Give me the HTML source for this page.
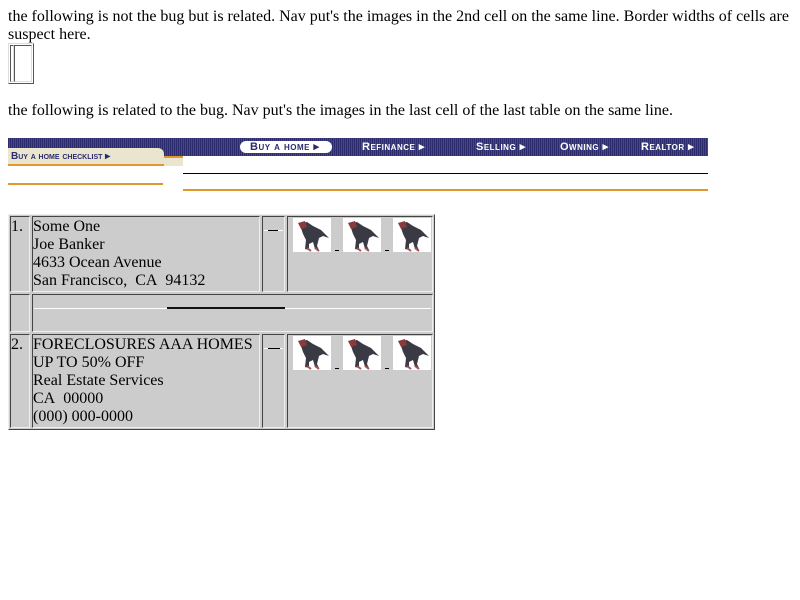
<!DOCTYPE html>
<html><head><meta charset="utf-8"><style>
*{margin:0;padding:0;box-sizing:border-box}
body{width:800px;height:600px;background:#fff;font-family:"Liberation Serif",serif;font-size:16px;color:#000;position:relative;overflow:hidden}
.a{position:absolute}
.t{line-height:18px;white-space:nowrap}
.nav{left:8px;top:138px;width:700px;height:18px;background:repeating-linear-gradient(90deg,#2b2b6e 0 1px,#46468a 1px 2px)}
.nl{position:absolute;top:2px;color:#fff;font-family:"Liberation Sans",sans-serif;font-weight:bold;font-size:11px;font-variant:small-caps;letter-spacing:.5px}
.cell{position:absolute;background:#ccc;border:1px solid;border-color:#444 #eee #eee #444}
</style></head><body>
<div class="a t" style="left:8px;top:8px">the following is not the bug but is related. Nav put's the images in the 2nd cell on the same line. Border widths of cells are</div>
<div class="a t" style="left:8px;top:26px">suspect here.</div>
<div class="a" style="left:8px;top:43px;width:26px;height:41px;border:1px solid;border-color:#ddd #555 #555 #ddd"></div>
<div class="a" style="left:10px;top:45px;width:4px;height:37px;border:1px solid;border-color:#555 #ddd #ddd #555"></div>
<div class="a" style="left:14px;top:45px;width:18px;height:37px;border:1px solid;border-color:#555 #ddd #ddd #555"></div>
<div class="a t" style="left:8px;top:102px">the following is related to the bug. Nav put's the images in the last cell of the last table on the same line.</div>

<div class="a nav">
 <div style="position:absolute;left:232px;top:3px;width:92px;height:12px;background:#fff;border-radius:6px"></div>
 <span class="nl" style="left:242px;color:#2b2b6e">Buy a home ▸</span>
 <span class="nl" style="left:354px">Refinance ▸</span>
 <span class="nl" style="left:468px">Selling ▸</span>
 <span class="nl" style="left:552px">Owning ▸</span>
 <span class="nl" style="left:633px">Realtor ▸</span>
</div>
<div class="a" style="left:8px;top:148px;width:156px;height:18px;background:#e9e5cf;border-top-right-radius:6px;border-bottom:2px solid #e0982e"></div>
<div class="a" style="left:11px;top:151px;font-family:'Liberation Sans',sans-serif;font-weight:bold;font-size:10px;font-variant:small-caps;color:#2b2b6e">Buy a home checklist ▸</div>
<div class="a" style="left:164px;top:156px;width:19px;height:10px;background:#e9e5cf;border-top:2px solid #e0982e"></div>
<div class="a" style="left:8px;top:183px;width:155px;height:2px;background:#e0982e"></div>
<div class="a" style="left:183px;top:173px;width:525px;height:1px;background:#000"></div>
<div class="a" style="left:183px;top:189px;width:525px;height:2px;background:#e0982e"></div>

<div class="a" style="left:8px;top:214px;width:427px;height:216px;background:#ccc;border:1px solid;border-color:#eee #444 #444 #eee"></div>
<div class="cell" style="left:10px;top:216px;width:20px;height:76px"></div>
<div class="cell" style="left:32px;top:216px;width:228px;height:76px"></div>
<div class="cell" style="left:262px;top:216px;width:23px;height:76px"></div>
<div class="cell" style="left:287px;top:216px;width:146px;height:76px"></div>
<div class="cell" style="left:10px;top:294px;width:20px;height:38px"></div>
<div class="cell" style="left:32px;top:294px;width:401px;height:38px"></div>
<div class="cell" style="left:10px;top:334px;width:20px;height:94px"></div>
<div class="cell" style="left:32px;top:334px;width:228px;height:94px"></div>
<div class="cell" style="left:262px;top:334px;width:23px;height:94px"></div>
<div class="cell" style="left:287px;top:334px;width:146px;height:94px"></div>

<div class="a t" style="left:11px;top:218px">1.</div>
<div class="a t" style="left:33px;top:218px">Some One<br>Joe Banker<br>4633 Ocean Avenue<br>San Francisco,&nbsp; CA&nbsp; 94132</div>
<div class="a" style="left:264px;top:230px;width:19px;height:1px;background:#fff"></div>
<div class="a" style="left:268px;top:230px;width:10px;height:1px;background:#000"></div>
<div class="a" style="left:34px;top:308px;width:397px;height:1px;background:#fff"></div>
<div class="a" style="left:167px;top:307px;width:118px;height:2px;background:#111"></div>
<div class="a t" style="left:11px;top:336px">2.</div>
<div class="a t" style="left:33px;top:336px">FORECLOSURES AAA HOMES<br>UP TO 50% OFF<br>Real Estate Services<br>CA&nbsp; 00000<br>(000) 000-0000</div>
<div class="a" style="left:264px;top:348px;width:19px;height:1px;background:#fff"></div>
<div class="a" style="left:268px;top:348px;width:12px;height:1px;background:#000"></div>

<svg class="a" style="left:0;top:0" width="800" height="600">
<defs><g id="d">
<rect width="38" height="34" fill="#fff"/>
<path d="M6 6 L14 4 L20 8 L28 12 L36 20 L30 18 L26 20 L24 28 L26 32 L22 31 L20 24 L16 26 L16 32 L12 31 L13 22 L10 16 L8 10 Z" fill="#3a3a44"/>
<path d="M5 5 L12 3 L14 9 L8 11 Z" fill="#8a3a3a"/>
<path d="M14 30 L18 33 M22 30 L26 33" stroke="#a05050" stroke-width="2"/>
</g></defs>
<use href="#d" x="293" y="218"/><use href="#d" x="343" y="218"/><use href="#d" x="393" y="218"/>
<use href="#d" x="293" y="336"/><use href="#d" x="343" y="336"/><use href="#d" x="393" y="336"/>
<rect x="335" y="250" width="4" height="1" fill="#000"/><rect x="385" y="250" width="4" height="1" fill="#000"/>
<rect x="335" y="368" width="4" height="1" fill="#000"/><rect x="385" y="368" width="4" height="1" fill="#000"/>
</svg>
</body></html>
